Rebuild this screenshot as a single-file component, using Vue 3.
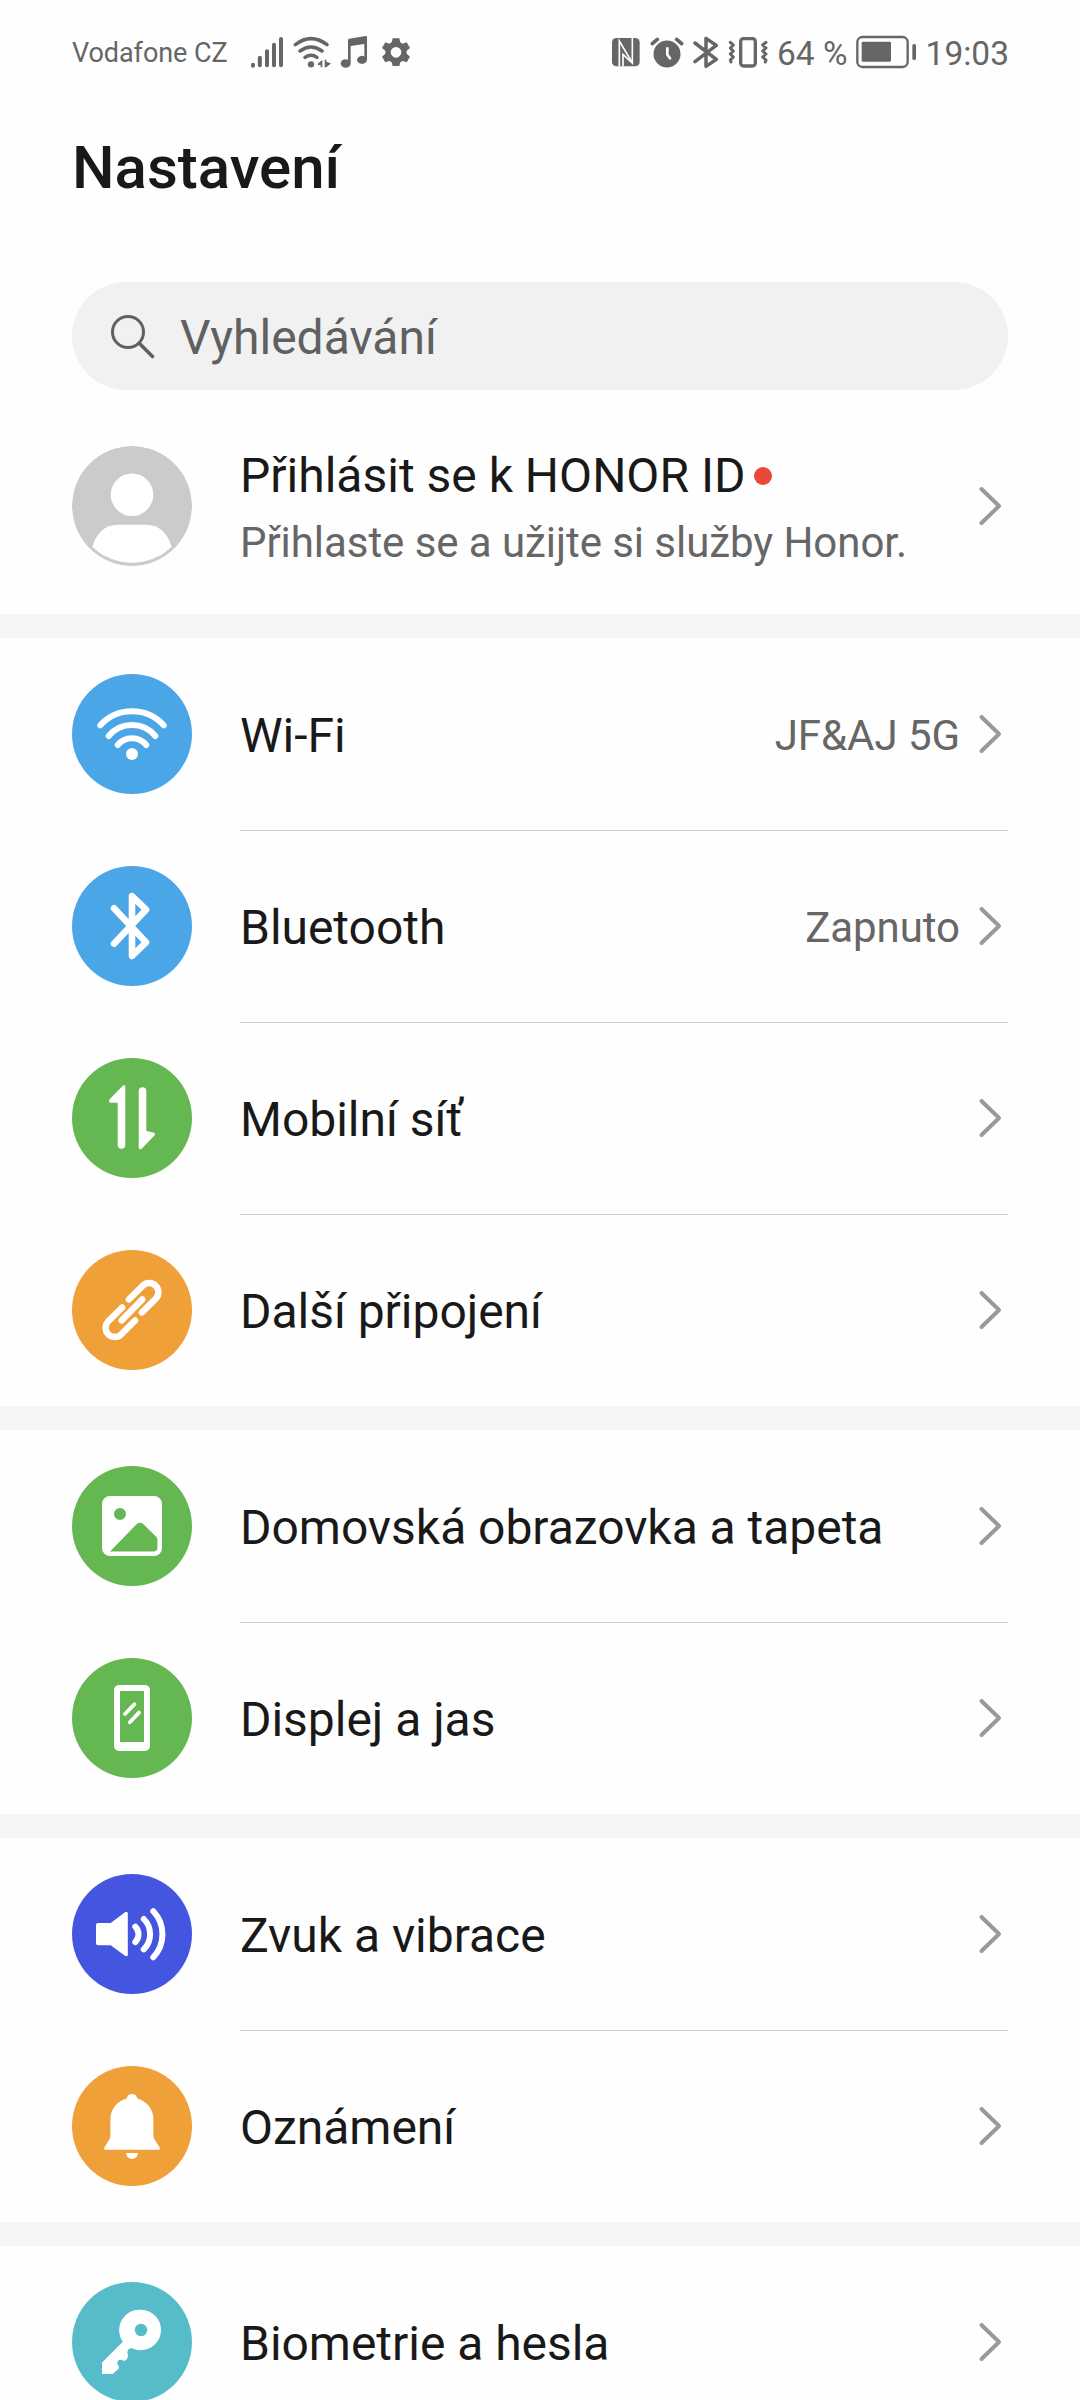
<script setup>
const wifi = [
  { d: 'M28.3 51.3A42.9 42.9 0 0 1 91.7 51.3M36.7 62A30.2 30.2 0 0 1 83.3 62M45.7 71A18.6 18.6 0 0 1 74.3 71', stroke: 6 },
  { d: 'M54 80a6 6 0 1 0 12 0a6 6 0 1 0-12 0z' },
]
const bluetooth = [{ d: 'M42 42.3L74 76.3L60 90V30L74 43.7L42 77.7', stroke: 6.6 }]
const mobile = [
  { d: 'M53.3 87V28.6Q53.3 26.4 51 27.6L37.6 41.2Q36.2 44.6 38.6 44.8H45.7V87A3.8 3.8 0 0 0 53.3 87zM66.7 33V89.4Q66.8 92.2 69.4 91L82.4 77.6Q83.8 74.8 81 74.6L74.3 73V33A3.8 3.8 0 0 0 66.7 33z' },
]
const link = [
  { d: 'M56.9 49.6L71 35.4A9.2 9.2 0 0 1 84 48.4L69.8 62.6M63.1 70.4L49 84.6A9.2 9.2 0 0 1 36 71.6L50.2 57.4M70.2 49.4L49.6 70.4', stroke: 6.4 },
]
const picture = [
  { d: 'M38 30H82a8 8 0 0 1 8 8V82a8 8 0 0 1-8 8H38a8 8 0 0 1-8-8V38a8 8 0 0 1 8-8zM48 42a6 6 0 1 0 0 12a6 6 0 1 0 0-12zM38 85.5H81.4Q85.4 85.5 85.4 81.4V73.6Q85.4 72 84.2 70.8L71.2 58.1Q68 55.6 64.8 58.1z' },
]
const display = [
  { d: 'M47 27H73a5 5 0 0 1 5 5V88a5 5 0 0 1-5 5H47a5 5 0 0 1-5-5V32a5 5 0 0 1 5-5zM48 33V84H72V33z' },
  { d: 'M53 56L62.4 46.2M57.8 64.3L67 54.6', stroke: 3.8 },
]
const sound = [
  { d: 'M26 49H38.7L53 38.2Q55.8 36.8 55.8 39.6V80.4Q55.8 83.2 53 81.8L38.7 71.3H26Q24 71.3 24 69.3V51Q24 49 26 49z' },
  { d: 'M63.3 52.6A11 11 0 0 1 63.3 68.1M71.8 45A21.5 21.5 0 0 1 71.8 75.4M81.3 37.2A33.5 33.5 0 0 1 81.3 83.2', stroke: 6 },
]
const bell = [
  { d: 'M54.7 32.4A5.4 5.4 0 0 1 65.3 32.4A21.6 21.6 0 0 1 81.4 54V70Q81.4 72 82.5 73.4L87.8 81.8Q88.6 83.8 86.8 83.8H33.2Q31.4 83.8 32.2 81.8L37.3 73.4Q38.4 72 38.4 70V54A21.6 21.6 0 0 1 54.7 32.4zM54 87H66A6 6 0 0 1 54 87z' },
]
const key = [
  { d: 'M69 27.8A20.2 20.2 0 1 1 62 67Q58.6 65.4 56.4 67.6Q54.6 69.6 55.9 72.6Q56.4 78.6 51.6 79Q48.4 76.6 46.4 78.6Q44.2 80.4 45.6 82.4Q48 85.6 46 87.6L40.5 92H30V80.6L50.8 59.7A20.2 20.2 0 0 1 69 27.8zM69 41.8a6.2 6.2 0 1 0 0 12.4a6.2 6.2 0 1 0 0-12.4z' },
]

const groups = [
  [
    { label: 'Wi-Fi', value: 'JF&AJ 5G', tone: 'blue', icon: wifi },
    { label: 'Bluetooth', value: 'Zapnuto', tone: 'blue', icon: bluetooth },
    { label: 'Mobilní síť', tone: 'green', icon: mobile },
    { label: 'Další připojení', tone: 'orange', icon: link },
  ],
  [
    { label: 'Domovská obrazovka a tapeta', tone: 'green', icon: picture },
    { label: 'Displej a jas', tone: 'green', icon: display },
  ],
  [
    { label: 'Zvuk a vibrace', tone: 'indigo', icon: sound },
    { label: 'Oznámení', tone: 'orange', icon: bell },
  ],
  [{ label: 'Biometrie a hesla', tone: 'teal', icon: key }],
]
</script>

<template>
  <div class="screen">
    <header class="status">
      <span class="carrier">Vodafone CZ</span>
      <div class="status-left">
        <svg width="34" height="36" viewBox="15 8 102 108">
          <path d="M24 103V106M44.500 82V105M66 63V105M87 43V105M108 26V105" class="line" stroke-width="12" />
        </svg>
        <svg width="38" height="36" viewBox="144 8 114 108">
          <path d="M151 43Q198 7 246 43M165 62Q198 38 231 62M180 81Q198 69 216 81" class="line" stroke-width="10.500" />
          <circle cx="198" cy="102" r="9.500" />
          <path d="M218 101L232 88V111H227V104H219zM239 88H244V94L257 99Q257 103 252 104L244 111H239z" />
        </svg>
        <svg width="28" height="36" viewBox="285 8 84 108">
          <path d="M309 29Q309 26 312 25L362 17Q366 17 366 21V88A15 12 0 1 1 358 78V41L317 47V98A15 13 0 1 1 309 88z" />
        </svg>
        <svg width="28" height="36" viewBox="411 8 84 108">
          <path
            fill-rule="evenodd"
            d="M443 24H463L466 36L473 40L485 36L495 53L485 61V70L495 79L485 96L473 92L466 96L463 107H443L440 96L433 92L421 96L411 79L421 70V61L411 53L421 36L433 40L440 36zM453 50a16 16 0 1 0 0 32a16 16 0 1 0 0-32z"
          />
        </svg>
      </div>
      <div class="status-right">
        <svg width="30" height="36" viewBox="18 8 90 108">
          <rect x="21" y="23" width="83" height="85" rx="13" />
          <path d="M43 108V32L80 94" class="cut" />
          <path d="M82 23V98L54 72V108" class="cut" />
        </svg>
        <svg width="34" height="36" viewBox="135 8 102 108">
          <circle cx="186" cy="71" r="40.500" />
          <path d="M142 40L157 27M230 40L215 27" class="line" stroke-width="11" />
          <path d="M187 54V73L195 84" class="cut hand" />
        </svg>
        <svg width="26" height="36" viewBox="267 8 78 108">
          <path d="M273 38L337 87L306 108V24L337 45L273 94" class="line" stroke-width="10.500" />
        </svg>
        <svg width="40" height="36" viewBox="375 8 120 108">
          <rect x="413" y="25" width="44" height="82" rx="9" class="line" stroke-width="10" />
          <path d="M382 36L391 44L382 53L391 62L382 71L391 80L382 89L384 95M489 36L479 44L489 53L479 62L489 71L479 80L489 89L487 95" class="line" stroke-width="9" />
        </svg>
        <span class="percent">64 %</span>
        <svg class="battery" width="60" height="36" viewBox="794 41 180 108">
          <rect x="798" y="53" width="151" height="90" rx="15" class="line" stroke-width="7" />
          <rect x="811" y="67" width="88" height="60" rx="4" />
          <rect x="963" y="74" width="11" height="48" rx="5" />
        </svg>
        <span class="clock">19:03</span>
      </div>
    </header>

    <h1 class="title">Nastavení</h1>

    <div class="search">
      <svg width="48" height="48" viewBox="0 0 48 48">
        <circle cx="20" cy="20" r="15.500" fill="none" stroke="currentColor" stroke-width="3" />
        <path d="M31.500 31.500L44.500 44.500" stroke="currentColor" stroke-width="3.600" stroke-linecap="round" />
      </svg>
      <span>Vyhledávání</span>
    </div>

    <section class="account">
      <svg class="badge" viewBox="0 0 120 120">
        <circle cx="60" cy="60" r="60" fill="#cbcbcb" />
        <circle cx="60" cy="48.700" r="21.300" fill="#fff" />
        <path d="M20.300 100.700Q27 79 45.500 78.700H74.500Q93 79 99.700 100.700A57 57 0 0 1 20.300 100.700z" fill="#fff" />
      </svg>
      <div class="account-text">
        <div class="account-name">Přihlásit se k HONOR ID<i class="dot"></i></div>
        <div class="account-note">Přihlaste se a užijte si služby Honor.</div>
      </div>
      <svg class="chevron" viewBox="0 0 24 40"><path d="M3.500 3L21 20L3.500 37" /></svg>
    </section>

    <section v-for="(rows, g) in groups" :key="g" class="group">
      <div v-for="row in rows" :key="row.label" class="row">
        <svg class="badge" :class="row.tone" viewBox="0 0 120 120">
          <path
            v-for="(part, i) in row.icon"
            :key="i"
            :d="part.d"
            fill-rule="evenodd"
            :fill="part.stroke ? 'none' : '#fff'"
            :stroke="part.stroke ? '#fff' : 'none'"
            :stroke-width="part.stroke"
            stroke-linecap="round"
            stroke-linejoin="round"
          />
        </svg>
        <div class="row-body">
          <span class="label">{{ row.label }}</span>
          <span v-if="row.value" class="value">{{ row.value }}</span>
          <svg class="chevron" viewBox="0 0 24 40"><path d="M3.500 3L21 20L3.500 37" /></svg>
        </div>
      </div>
    </section>
  </div>
</template>

<style>
body {
  margin: 0;
  background: #fefefe;
}
</style>

<style scoped>
.screen {
  width: 1080px;
  height: 2400px;
  overflow: hidden;
  background: #fefefe;
  color: #191919;
  font-family: Roboto, "Noto Sans", sans-serif;
}
svg {
  display: block;
  flex: none;
}
.status {
  display: flex;
  align-items: center;
  height: 101px;
  padding: 0 71px 0 72px;
  color: #666;
  fill: #666;
  white-space: nowrap;
}
.carrier {
  width: 178px;
  padding-top: 4px;
  font-size: 27px;
  letter-spacing: -0.08px;
}
.status-left,
.status-right {
  display: flex;
  align-items: center;
  gap: 9px;
}
.status-left svg:last-child {
  margin-left: 5px;
}
.status-right {
  margin-left: auto;
}
.line {
  fill: none;
  stroke: #666;
  stroke-linecap: round;
  stroke-linejoin: round;
}
.cut {
  fill: none;
  stroke: #fefefe;
  stroke-width: 5;
}
.hand {
  stroke-width: 8;
  stroke-linecap: round;
}
.percent,
.clock {
  padding-top: 5px;
  font-size: 33.5px;
}
.battery {
  margin-left: -1px;
  margin-right: 1px;
}
.title {
  margin: 0;
  padding: 31px 72px 0;
  height: 150px;
  font-size: 60px;
  line-height: 72px;
  font-weight: 500;
}
.search {
  display: flex;
  align-items: center;
  gap: 24px;
  height: 108px;
  margin: 0 72px;
  padding-left: 36px;
  box-sizing: border-box;
  border-radius: 54px;
  background: #f1f1f1;
  color: #606060;
  font-size: 48px;
}
.search span {
  padding-top: 2px;
}
.account {
  display: flex;
  align-items: center;
  height: 224px;
  padding: 8px 72px 0;
  box-sizing: border-box;
}
.badge {
  width: 120px;
  height: 120px;
  margin-right: 48px;
  border-radius: 50%;
}
.account-text {
  flex: 1;
  padding-top: 8px;
  white-space: nowrap;
}
.account-name {
  display: flex;
  align-items: center;
  font-size: 48px;
  line-height: 66px;
}
.dot {
  width: 18px;
  height: 18px;
  margin-left: 9px;
  border-radius: 50%;
  background: #e94738;
}
.account-note {
  color: #666;
  font-size: 42px;
  line-height: 68px;
  letter-spacing: -0.06px;
}
.group {
  border-top: 24px solid #f6f6f6;
}
.row {
  display: flex;
  align-items: center;
  height: 192px;
  padding: 0 72px;
}
.row-body {
  display: flex;
  align-items: center;
  flex: 1;
  height: 192px;
  white-space: nowrap;
}
.row + .row .row-body {
  box-shadow: inset 0 1px #c9c9c9;
}
.label {
  flex: 1;
  padding-top: 3px;
  font-size: 48px;
  letter-spacing: -0.03px;
}
.value {
  padding-top: 3px;
  margin-right: 18px;
  color: #666;
  font-size: 42px;
  letter-spacing: -0.06px;
}
.chevron {
  width: 24px;
  height: 40px;
  margin-right: 6px;
}
.chevron path {
  fill: none;
  stroke: #999;
  stroke-width: 4;
  stroke-linecap: round;
  stroke-linejoin: round;
}
.blue { background: #4ba6e8; }
.green { background: #65b751; }
.orange { background: #f0a039; }
.indigo { background: #4456e0; }
.teal { background: #57bcc9; }
</style>
